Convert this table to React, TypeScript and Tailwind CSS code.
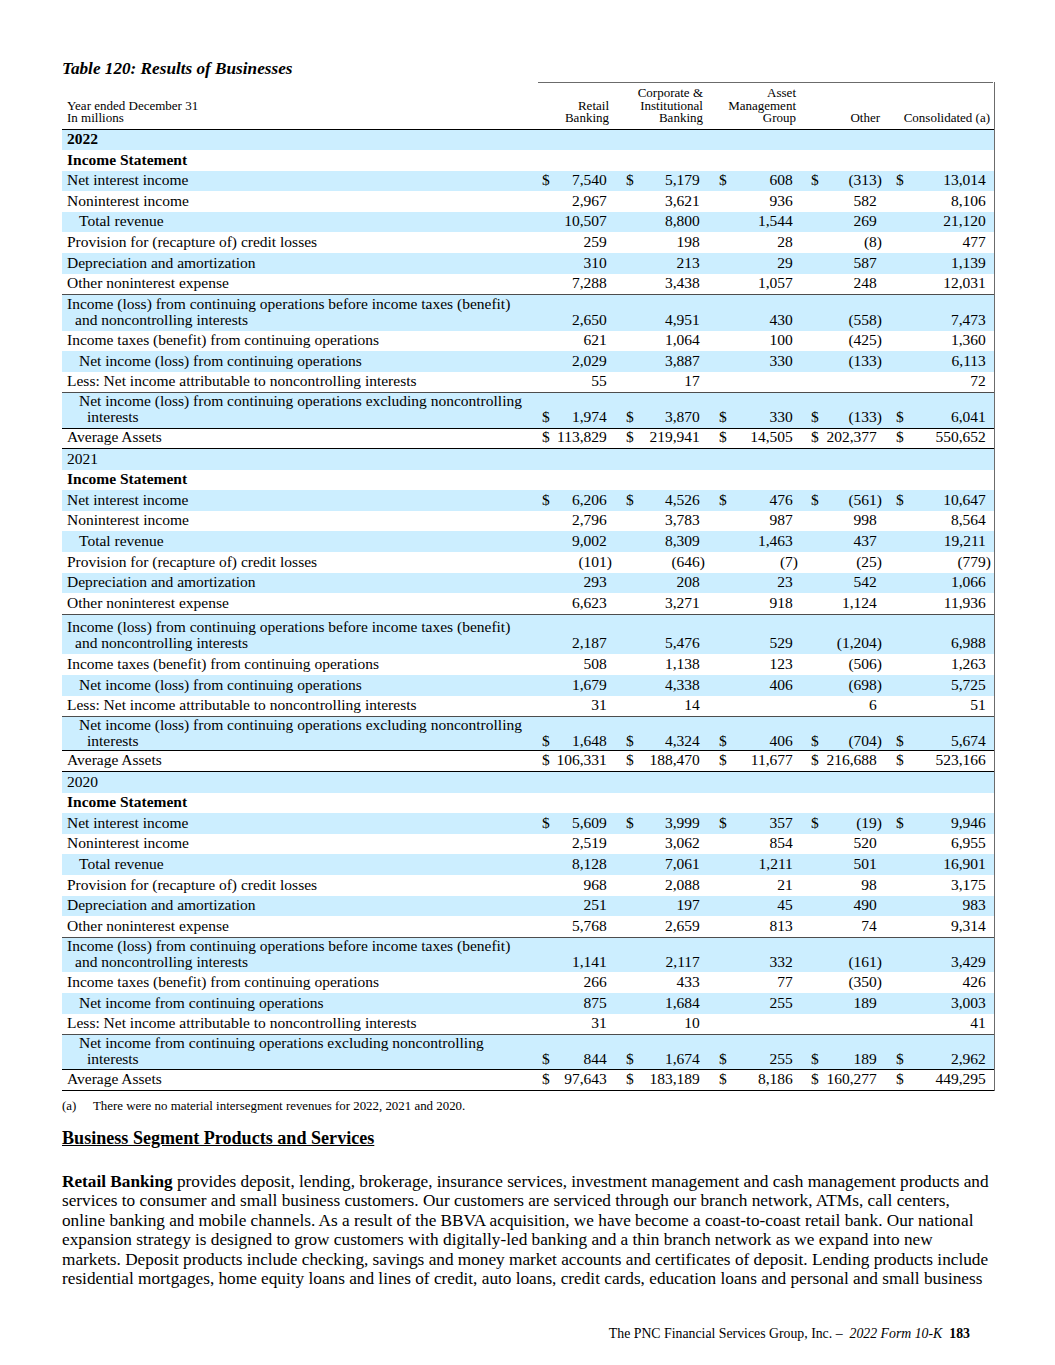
import React from "react";

const COLS = "grid grid-cols-[476px_74px_93px_93px_84px_111px]";
const PL = ["pl-[4px]", "pl-[14px]", "pl-[14px]", "pl-[13px]", "pl-[14px]"];
const PR = ["pr-0", "pr-0", "pr-0", "pr-0", "pr-[2px]"];
const BLUE = "bg-[#cceeff]";

type LabelLine = [string, string];
type RowDef = {
  label?: string;
  lines?: LabelLine[];
  indent?: string;
  dollar?: boolean;
  two?: number;
  bt?: boolean;
  bb?: boolean;
  key: string;
};

type Section = {
  year: string;
  bold: boolean;
  twoH: [string, string];
  data: Record<string, string[]>;
  niLabel: string;
  niexLine: string;
};

const sections: Section[] = [
  {
    year: "2022",
    bold: true,
    twoH: ["h-[36.3px]", "h-[36.2px]"],
    niLabel: "Net income (loss) from continuing operations",
    niexLine: "Net income (loss) from continuing operations excluding noncontrolling",
    data: {
      nii: ["7,540", "5,179", "608", "(313)", "13,014"],
      nonint: ["2,967", "3,621", "936", "582", "8,106"],
      tr: ["10,507", "8,800", "1,544", "269", "21,120"],
      prov: ["259", "198", "28", "(8)", "477"],
      da: ["310", "213", "29", "587", "1,139"],
      other: ["7,288", "3,438", "1,057", "248", "12,031"],
      inc: ["2,650", "4,951", "430", "(558)", "7,473"],
      it: ["621", "1,064", "100", "(425)", "1,360"],
      ni: ["2,029", "3,887", "330", "(133)", "6,113"],
      less: ["55", "17", "", "", "72"],
      niex: ["1,974", "3,870", "330", "(133)", "6,041"],
      aa: ["113,829", "219,941", "14,505", "202,377", "550,652"],
    },
  },
  {
    year: "2021",
    bold: false,
    twoH: ["h-[40.6px]", "h-[35.2px]"],
    niLabel: "Net income (loss) from continuing operations",
    niexLine: "Net income (loss) from continuing operations excluding noncontrolling",
    data: {
      nii: ["6,206", "4,526", "476", "(561)", "10,647"],
      nonint: ["2,796", "3,783", "987", "998", "8,564"],
      tr: ["9,002", "8,309", "1,463", "437", "19,211"],
      prov: ["(101)", "(646)", "(7)", "(25)", "(779)"],
      da: ["293", "208", "23", "542", "1,066"],
      other: ["6,623", "3,271", "918", "1,124", "11,936"],
      inc: ["2,187", "5,476", "529", "(1,204)", "6,988"],
      it: ["508", "1,138", "123", "(506)", "1,263"],
      ni: ["1,679", "4,338", "406", "(698)", "5,725"],
      less: ["31", "14", "", "6", "51"],
      niex: ["1,648", "4,324", "406", "(704)", "5,674"],
      aa: ["106,331", "188,470", "11,677", "216,688", "523,166"],
    },
  },
  {
    year: "2020",
    bold: false,
    twoH: ["h-[35.6px]", "h-[36.2px]"],
    niLabel: "Net income from continuing operations",
    niexLine: "Net income from continuing operations excluding noncontrolling",
    data: {
      nii: ["5,609", "3,999", "357", "(19)", "9,946"],
      nonint: ["2,519", "3,062", "854", "520", "6,955"],
      tr: ["8,128", "7,061", "1,211", "501", "16,901"],
      prov: ["968", "2,088", "21", "98", "3,175"],
      da: ["251", "197", "45", "490", "983"],
      other: ["5,768", "2,659", "813", "74", "9,314"],
      inc: ["1,141", "2,117", "332", "(161)", "3,429"],
      it: ["266", "433", "77", "(350)", "426"],
      ni: ["875", "1,684", "255", "189", "3,003"],
      less: ["31", "10", "", "", "41"],
      niex: ["844", "1,674", "255", "189", "2,962"],
      aa: ["97,643", "183,189", "8,186", "160,277", "449,295"],
    },
  },
];

function Val({ v, dollar, i }: { v: string; dollar?: boolean; i: number }) {
  const paren = v.endsWith(")");
  const num = paren ? v.slice(0, -1) : v;
  return (
    <div className={`flex items-end justify-between ${PL[i]} ${PR[i]}`}>
      <span>{dollar ? "$" : ""}</span>
      <span className="flex">
        <span>{num}</span>
        <span className="w-[5.2px]">{paren ? ")" : ""}</span>
      </span>
    </div>
  );
}

function Row({
  def,
  vals,
  blue,
  h,
}: {
  def: RowDef;
  vals: string[];
  blue: boolean;
  h: string;
}) {
  const borders = [
    def.bt ? "border-t border-t-[#4d4d4d]" : "",
    def.bb ? "border-b-[1.5px] border-b-black" : "",
  ].join(" ");
  return (
    <div className={`${COLS} ${h} ${blue ? BLUE : "bg-white"} ${borders} items-end pb-[3px] leading-[16px]`}>
      <div className="flex flex-col whitespace-nowrap">
        {def.lines ? (
          def.lines.map(([t, p], k) => (
            <span key={k} className={p}>
              {t}
            </span>
          ))
        ) : (
          <span className={def.indent ?? "pl-[5px]"}>{def.label}</span>
        )}
      </div>
      {vals.map((v, i) => (
        <Val key={i} v={v} dollar={def.dollar} i={i} />
      ))}
    </div>
  );
}

function YearSection({ s }: { s: Section }) {
  const defs: RowDef[] = [
    { key: "nii", label: "Net interest income", dollar: true },
    { key: "nonint", label: "Noninterest income" },
    { key: "tr", label: "Total revenue", indent: "pl-[17px]" },
    { key: "prov", label: "Provision for (recapture of) credit losses" },
    { key: "da", label: "Depreciation and amortization" },
    { key: "other", label: "Other noninterest expense" },
    {
      key: "inc",
      lines: [
        ["Income (loss) from continuing operations before income taxes (benefit)", "pl-[5px]"],
        ["and noncontrolling interests", "pl-[13px]"],
      ],
      two: 0,
      bt: true,
    },
    { key: "it", label: "Income taxes (benefit) from continuing operations" },
    { key: "ni", label: s.niLabel, indent: "pl-[17px]" },
    { key: "less", label: "Less: Net income attributable to noncontrolling interests" },
    {
      key: "niex",
      lines: [
        [s.niexLine, "pl-[17px]"],
        ["interests", "pl-[25px]"],
      ],
      two: 1,
      dollar: true,
      bt: true,
      bb: true,
    },
    { key: "aa", label: "Average Assets", dollar: true, bb: true },
  ];
  return (
    <>
      <div className={`h-[20.6px] ${BLUE} flex items-end pb-[3px] leading-[16px] pl-[5px] ${s.bold ? "font-bold" : ""}`}>
        {s.year}
      </div>
      <div className="h-[20.6px] bg-white flex items-end pb-[3px] leading-[16px] pl-[5px] font-bold">
        Income Statement
      </div>
      {defs.map((d, idx) => (
        <Row
          key={d.key}
          def={d}
          vals={s.data[d.key]}
          blue={idx % 2 === 0}
          h={d.two !== undefined ? s.twoH[d.two] : "h-[20.6px]"}
        />
      ))}
    </>
  );
}

export default function App() {
  return (
    <div className="w-[1055px] h-[1365px] bg-white text-black font-['Liberation_Serif',serif] overflow-hidden">
      <div className="pl-[62px] pt-[59px]">
        <div className="text-[17.2px] leading-[19px] font-bold italic">Table 120: Results of Businesses</div>
        <div className="mt-[4px] w-[932.5px] border-r-[1.5px] border-r-[#6b6b6b] text-[15.5px]">
          <div className={`${COLS} h-[47.5px] items-end border-b-[1.5px] border-b-black text-[13px] leading-[12.6px] pb-[3.5px]`}>
            <div className="pl-[5px] flex flex-col">
              <span>Year ended December 31</span>
              <span>In millions</span>
            </div>
            <div className="text-right pr-[3px] self-stretch flex flex-col justify-end border-t border-t-[#6b6b6b]">
              <span>Retail</span>
              <span>Banking</span>
            </div>
            <div className="text-right pr-[2px] self-stretch flex flex-col justify-end border-t border-t-[#6b6b6b]">
              <span>Corporate &amp;</span>
              <span>Institutional</span>
              <span>Banking</span>
            </div>
            <div className="text-right pr-[2px] self-stretch flex flex-col justify-end border-t border-t-[#6b6b6b]">
              <span>Asset</span>
              <span>Management</span>
              <span>Group</span>
            </div>
            <div className="text-right pr-[2px] self-stretch flex flex-col justify-end border-t border-t-[#6b6b6b]">
              <span>Other</span>
            </div>
            <div className="text-right pr-[3px] self-stretch flex flex-col justify-end border-t border-t-[#6b6b6b]">
              <span>Consolidated (a)</span>
            </div>
          </div>
          {sections.map((s) => (
            <YearSection key={s.year} s={s} />
          ))}
        </div>
        <div className="mt-[8px] text-[12.9px] leading-[15px] flex">
          <span className="w-[31px]">(a)</span>
          <span>There were no material intersegment revenues for 2022, 2021 and 2020.</span>
        </div>
        <div className="mt-[14px] text-[18.1px] leading-[21px] font-bold underline">
          Business Segment Products and Services
        </div>
        <div className="mt-[23px] text-[17.24px] leading-[19.4px] whitespace-nowrap">
          <div>
            <span className="font-bold">Retail Banking</span> provides deposit, lending, brokerage, insurance services, investment management and cash management products and
          </div>
          <div>services to consumer and small business customers. Our customers are serviced through our branch network, ATMs, call centers,</div>
          <div>online banking and mobile channels. As a result of the BBVA acquisition, we have become a coast-to-coast retail bank. Our national</div>
          <div>expansion strategy is designed to grow customers with digitally-led banking and a thin branch network as we expand into new</div>
          <div>markets. Deposit products include checking, savings and money market accounts and certificates of deposit. Lending products include</div>
          <div>residential mortgages, home equity loans and lines of credit, auto loans, credit cards, education loans and personal and small business</div>
        </div>
      </div>
      <div className="mt-[38px] flex justify-end pr-[85px] text-[13.8px] leading-[16px] whitespace-nowrap">
        <span>The PNC Financial Services Group, Inc. –</span>
        <span className="italic ml-[7px]">2022 Form 10-K</span>
        <span className="font-bold ml-[7px]">183</span>
      </div>
    </div>
  );
}
